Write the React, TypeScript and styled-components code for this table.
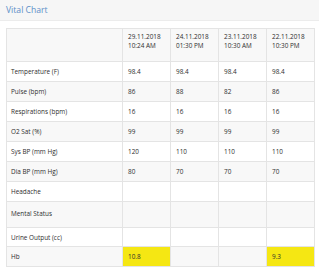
import React from "react";
import styled, { createGlobalStyle } from "styled-components";

const GlobalStyle = createGlobalStyle`
  html, body {
    margin: 0;
    padding: 0;
    background: #ffffff;
    font-family: "Open Sans", "Liberation Sans", sans-serif;
  }
`;

const Page = styled.div`
  width: 319px;
  height: 270px;
  overflow: hidden;
  background: #ffffff;
`;

const Header = styled.div`
  height: 20px;
  display: flex;
  align-items: center;
  padding: 0 6px;
  background: #f6f6f6;
  border-bottom: 1px solid #ececec;

  & span {
    font-size: 8.6px;
    color: #5d8fc8;
  }
`;

const Content = styled.div`
  padding: 7px 4px 0 6px;
`;

const Table = styled.table`
  width: 309px;
  border-collapse: collapse;
  table-layout: fixed;
  font-size: 6.4px;
  color: #2e2e2e;

  & td {
    border: 1px solid #e4e4e4;
    padding: 0 5px;
    height: 19px;
    box-sizing: border-box;
    vertical-align: middle;
    white-space: nowrap;
  }

  & td:first-child {
    width: 116px;
    padding-left: 4px;
  }

  & tr:nth-child(odd) td {
    background: #f8f8f8;
  }
`;

const HeadRow = styled.tr`
  & td {
    height: 33px !important;
    vertical-align: top !important;
    padding-top: 4px !important;
    line-height: 8.6px;
  }
`;

const Row = styled.tr<{ $h?: number; $top?: boolean }>`
  & td {
    height: ${(p) => p.$h || 20}px;
    vertical-align: ${(p) => (p.$top ? "top" : "middle")};
    padding-top: ${(p) => (p.$top ? "7px" : "0")};
  }
`;

const Flag = styled.td`
  &&&& {
    background: #f5e713;
  }
`;

const dates = [
  ["29.11.2018", "10:24 AM"],
  ["24.11.2018", "01:30 PM"],
  ["23.11.2018", "10:30 AM"],
  ["22.11.2018", "10:30 PM"],
];

type Vital = { label: string; values: string[]; h?: number; top?: boolean; flags?: number[] };

const vitals: Vital[] = [
  { label: "Temperature (F)", values: ["98.4", "98.4", "98.4", "98.4"] },
  { label: "Pulse (bpm)", values: ["86", "88", "82", "86"] },
  { label: "Respirations (bpm)", values: ["16", "16", "16", "16"] },
  { label: "O2 Sat (%)", values: ["99", "99", "99", "99"] },
  { label: "Sys BP (mm Hg)", values: ["120", "110", "110", "110"] },
  { label: "Dia BP (mm Hg)", values: ["80", "70", "70", "70"] },
  { label: "Headache", values: ["", "", "", ""] },
  { label: "Mental Status", values: ["", "", "", ""], h: 26, top: true },
  { label: "Urine Output (cc)", values: ["", "", "", ""], h: 19 },
  { label: "Hb", values: ["10.8", "", "", "9.3"], flags: [0, 3] },
];

const App = () => {
  return (
    <Page>
      <GlobalStyle />
      <Header>
        <span>Vital Chart</span>
      </Header>
      <Content>
        <Table>
          <tbody>
            <HeadRow>
              <td></td>
              {dates.map((d) => (
                <td key={d[0]}>
                  {d[0]}
                  <br />
                  {d[1]}
                </td>
              ))}
            </HeadRow>
            {vitals.map((v) => (
              <Row key={v.label} $h={v.h} $top={v.top}>
                <td>{v.label}</td>
                {v.values.map((val, i) =>
                  v.flags?.includes(i) ? (
                    <Flag key={i}>{val}</Flag>
                  ) : (
                    <td key={i}>{val}</td>
                  )
                )}
              </Row>
            ))}
          </tbody>
        </Table>
      </Content>
    </Page>
  );
};

export default App;
